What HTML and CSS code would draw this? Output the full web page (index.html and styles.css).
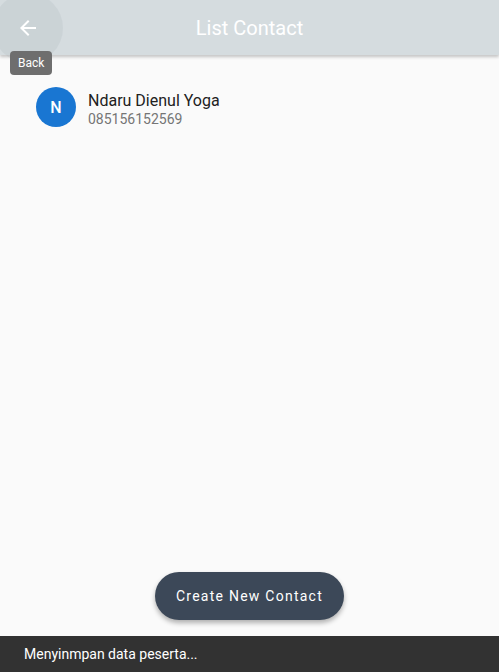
FILE: index.html
```html
<!DOCTYPE html>
<html>
<head>
<meta charset="utf-8">
<link rel="stylesheet" href="styles.css">
</head>
<body>
<div class="screen">
  <header class="appbar">
    <div class="back">
      <div class="ripple"></div>
      <svg class="back-icon" width="24" height="24" viewBox="0 0 24 24"><path d="M20 11H7.83l5.59-5.59L12 4l-8 8 8 8 1.41-1.41L7.83 13H20v-2z" fill="#fff"/></svg>
    </div>
    <h1 class="title">List Contact</h1>
    <div class="tooltip">Back</div>
  </header>
  <main class="content">
    <div class="contact">
      <div class="avatar">N</div>
      <div class="info">
        <div class="name">Ndaru Dienul Yoga</div>
        <div class="phone">085156152569</div>
      </div>
    </div>
  </main>
  <div class="fab-wrap">
    <button class="fab">Create New Contact</button>
  </div>
  <div class="snackbar">Menyinmpan data peserta...</div>
</div>
</body>
</html>
```
FILE: styles.css
```css
* { box-sizing: border-box; }
html, body { margin: 0; padding: 0; }
body { font-family: Roboto, "Noto Sans", sans-serif; background: #fafafa; }
.screen { width: 499px; height: 672px; display: flex; flex-direction: column; position: relative; overflow: hidden; }
.appbar { height: 55px; background: #d5dcdf; box-shadow: 0 2px 3px rgba(0,0,0,0.22); display: flex; align-items: center; position: relative; z-index: 2; flex-shrink: 0; }
.back { width: 56px; height: 55px; position: relative; display: flex; align-items: center; justify-content: center; }
.ripple { position: absolute; left: -7px; top: -7px; width: 70px; height: 70px; border-radius: 50%; background: rgba(160,170,175,0.18); }
.back-icon { position: relative; }
.title { flex: 1; margin: 0; padding-right: 56px; text-align: center; font-size: 20px; font-weight: 400; color: #fff; }
.tooltip { position: absolute; left: 10px; top: 51px; height: 24px; padding: 0 8px; display: flex; align-items: center; background: #6e6e6e; color: #fff; font-size: 12px; border-radius: 4px; }
.content { flex: 1; padding-top: 32px; }
.contact { display: flex; align-items: center; padding: 0 16px 0 36px; gap: 12px; }
.avatar { width: 40px; height: 40px; border-radius: 50%; background: #1976d2; color: #fff; display: flex; align-items: center; justify-content: center; font-size: 16px; font-weight: 500; }
.info { display: flex; flex-direction: column; }
.name { font-size: 16px; font-weight: 400; color: #212121; line-height: 24px; }
.phone { font-size: 14px; color: #757575; line-height: 12px; }
.fab-wrap { display: flex; justify-content: center; padding-bottom: 16px; }
.fab { height: 48px; padding: 0 21px; border: none; border-radius: 24px; background: #3c4858; color: #fff; font-family: Roboto, sans-serif; font-size: 14px; font-weight: 400; letter-spacing: 1.25px; box-shadow: 0 3px 5px rgba(0,0,0,0.3); }
.snackbar { height: 36px; background: #323232; color: #fff; font-size: 14px; display: flex; align-items: center; padding-left: 24px; flex-shrink: 0; }
```
